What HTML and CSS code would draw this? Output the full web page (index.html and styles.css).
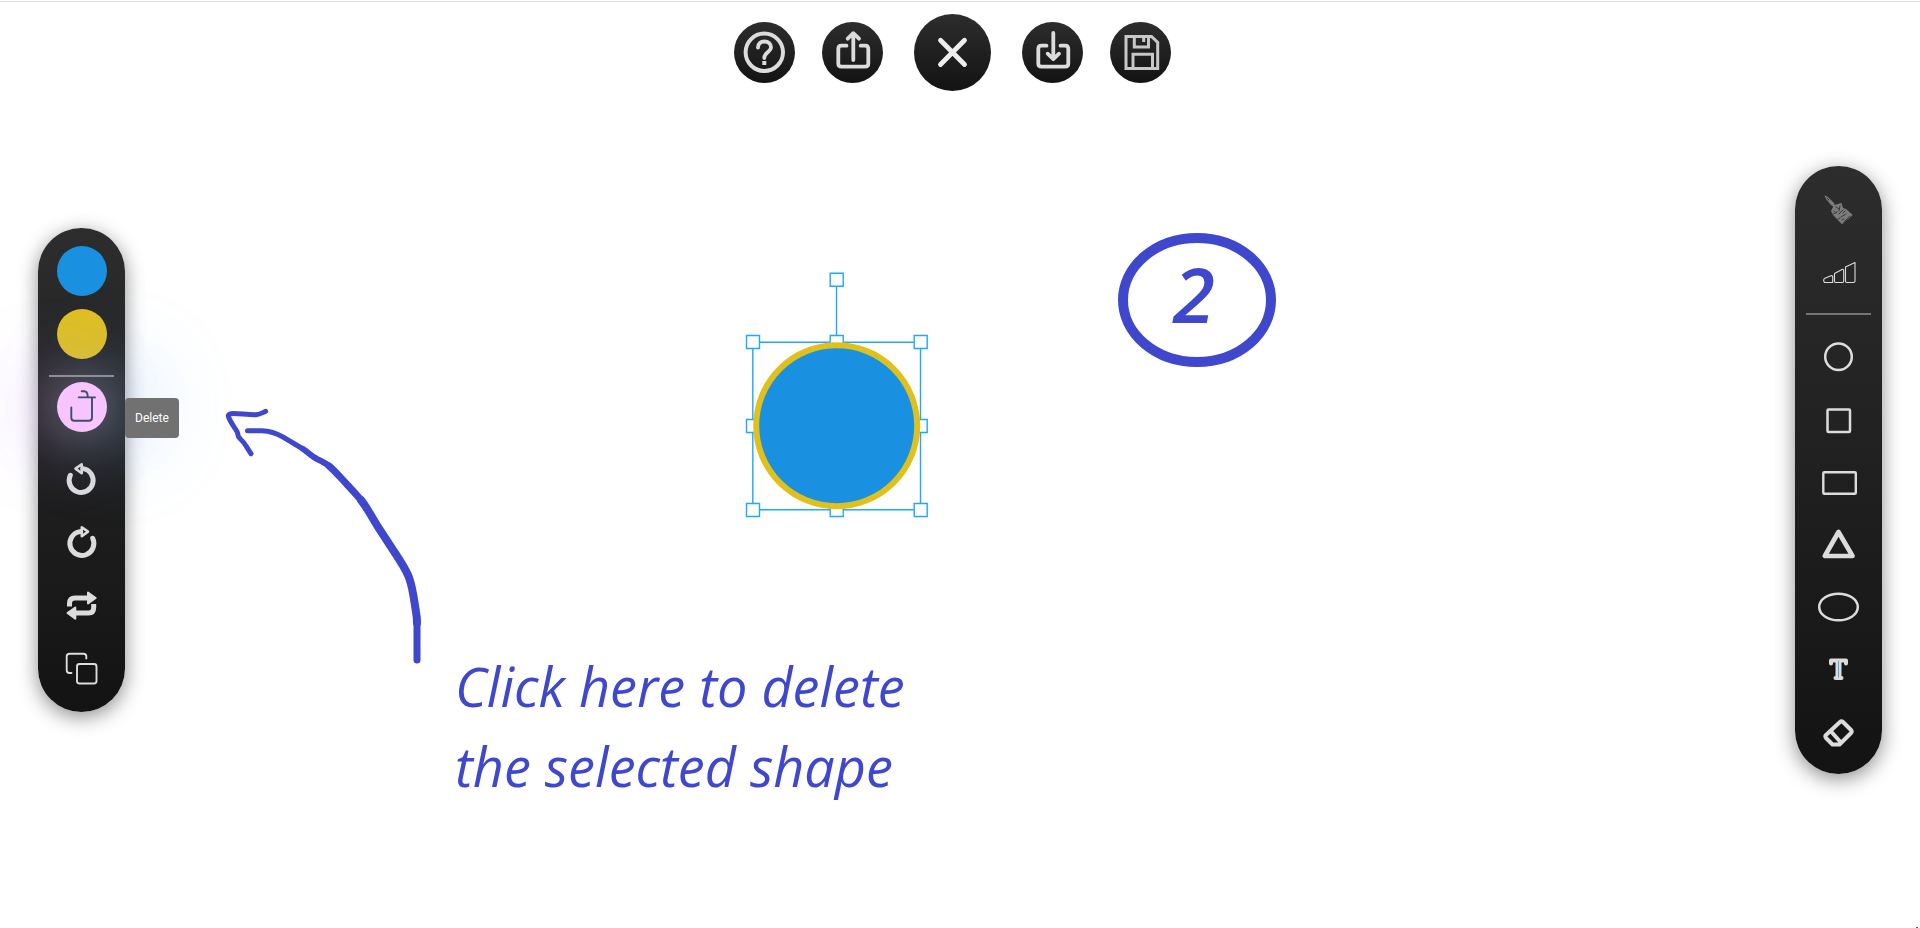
FILE: index.html
```html
<!DOCTYPE html>
<html lang="en">
<head>
<meta charset="utf-8">
<title>Whiteboard</title>
<link rel="stylesheet" href="styles.css">
</head>
<body>
<div class="app">
  <section class="canvas" aria-label="Drawing canvas">
    <svg class="drawing" aria-hidden="true">
      <g class="selection">
        <path d="M836.500 286V336M752.800 342.200H920.500V509.700H752.800Z"/>
        <path d="M830.200 273.200h13v13h-13zM746.500 335.500h13v13h-13zM830.200 335.500h13v13h-13zM914.200 335.500h13v13h-13zM746.500 419.500h13v13h-13zM914.200 419.500h13v13h-13zM746.500 503.500h13v13h-13zM830.200 503.500h13v13h-13zM914.200 503.500h13v13h-13z"/>
      </g>
      <circle class="shape" cx="836.7" cy="425.7" r="80.500"/>
      <g class="ink">
        <ellipse cx="1197" cy="300" rx="74" ry="62" stroke-width="10"/>
        <path stroke-width="5" d="M265.700 411.300C262 413 260 414.500 256 414.700C248 415 236 413 231 413.700Q227 414.500 229 418C231 423 235 428 237 431.500C238.500 434 237 436 240 438.500C245 443 247 448 251 453.700"/>
        <path stroke-width="5" d="M247.500 430.700H262C270 431 276 433 283 437L303 449C307 452 310 455 315 458"/>
        <path stroke-width="6" d="M303 449C308 452 311 456 317 459Q326 463 331 467.500"/>
        <path stroke-width="7" d="M329 466C335 471 340 477 347 484.500C353 491 359 497 364 504"/>
        <path stroke-width="8" d="M361 500C368 509 374 521 380 530L397 556C402 564 407 571 409.500 579C413 589 414 600 416 612Q417 617 417 623"/>
        <path stroke-width="7" d="M417 620V660"/>
      </g>
      <path class="speck" d="M1916 927h2v1h-2z"/>
    </svg>
    <p class="note">Click here to delete<br>the selected shape</p>
    <p class="step">2</p>
  </section>

  <header class="topbar">
    <button class="round" aria-label="Help"><svg viewBox="0 0 61 61"><circle cx="30.300" cy="30.300" r="18.700" stroke-width="4"/><path stroke-width="3.800" d="M24 25.500C24 21.500 26.800 19.500 30.500 19.500C34.500 19.500 37 22 37 25.300C37 30 30.300 30 30.300 36"/><path class="solid" d="M28.300 39h4v4h-4z"/></svg></button>
    <button class="round" aria-label="Share"><svg viewBox="0 0 61 61" stroke-width="3.800"><path d="M24.500 23.700H19.500Q16.300 23.700 16.300 27V41.500Q16.300 44.700 19.500 44.700H43Q46.300 44.700 46.300 41.500V27Q46.300 23.700 43 23.700H38.700M31.300 38V11.500M25.700 16.700L31.300 11.200L37 16.700"/></svg></button>
    <button class="round round-large" aria-label="Close"><svg viewBox="0 0 77 77"><path class="bright" stroke-width="4.800" d="M26.500 26.200L50.500 50.500M50.500 26.200L26.500 50.500"/></svg></button>
    <button class="round" aria-label="Download"><svg viewBox="0 0 61 61" stroke-width="3.800"><path d="M24.500 23.700H19.500Q16.300 23.700 16.300 27V41.500Q16.300 44.700 19.500 44.700H43Q46.300 44.700 46.300 41.500V27Q46.300 23.700 43 23.700H38.500M31.300 11V37M25.700 31.700L31.300 37.200L37 31.700"/></svg></button>
    <button class="round" aria-label="Save"><svg viewBox="0 0 61 61" class="sharp" stroke-width="3"><path d="M16 14.500H41.500L47.700 20.500V46.500H16ZM24.300 14.500V25H38.500V14.500M33.700 14.500V20M23 46.500V32.300H42.500V46.500"/></svg></button>
  </header>

  <main class="stage">
    <aside class="panel" aria-label="Edit">
      <button class="tool swatch fill" aria-label="Fill colour"></button>
      <button class="tool swatch outline" aria-label="Stroke colour"></button>
      <hr class="rule rule-tight">
      <div class="holder">
        <button class="tool swatch trash" aria-label="Delete" aria-describedby="tip"><svg viewBox="0 0 50 50" stroke-width="1.900"><path d="M14.300 25.500V35.700Q14.300 38.700 17.300 38.700H32Q35 38.700 35 35.700V15.400M21.700 15.400H38M24.700 9.300H27Q30.700 9.300 30.700 14.500"/></svg></button>
        <span class="tip" id="tip" role="tooltip">Delete</span>
      </div>
      <button class="tool" aria-label="Undo"><svg viewBox="0 0 50 50"><path stroke-width="5" d="M13.300 20.300A12 12 0 1 0 26 13.600"/><path stroke-width="2.600" d="M18.500 13.600L24.700 9.300V18.200Z"/></svg></button>
      <button class="tool" aria-label="Redo"><svg viewBox="0 0 50 50"><path stroke-width="5" d="M35.700 20.300A12 12 0 1 1 23 13.600"/><path stroke-width="2.600" d="M31 13.600L24.800 9.300V18.200Z"/></svg></button>
      <button class="tool" aria-label="Swap"><svg viewBox="0 0 50 50"><path class="sharp" stroke-width="5" d="M12.500 25.500V22.500Q12.500 17 18 17H30M36.700 23V26.500Q36.700 32 31.500 32H19"/><path class="solid" stroke-width="2" d="M31 11.500L38.700 17L31 22.500ZM18.300 26.500L10.500 32L18.300 37.700Z"/></svg></button>
      <button class="tool" aria-label="Duplicate"><svg viewBox="0 0 50 50" stroke-width="1.900"><path d="M14.500 29H12.500Q9.700 29 9.700 26V12.500Q9.700 9.800 12.500 9.800H26.500Q29.300 9.800 29.300 12.500V14.500"/><rect x="20" y="20" width="19.500" height="19.500" rx="2.500"/></svg></button>
    </aside>

    <aside class="panel panel-shapes" aria-label="Shapes">
      <button class="tool" aria-label="Brush"><svg viewBox="0 0 50 50"><path class="grey" d="M10.300 11.300L14 13L20 19L21.500 24L17 21L12 15Z"/><path class="grey" d="M17 27L20 21L27.500 19L29 24L32 25L38.700 31L28 40.300L19 31Z"/><path class="grain" stroke-width="1" d="M20 27l2 2M22 23l3 2M26 22l-1 5M19 30l4-2M25 30l4-4M31 27l-2 2M27 33l5-3M24 35l2-1M30 38l6-6M28 36l2-1M13 14l2 2"/></svg></button>
      <button class="tool" aria-label="Thickness"><svg viewBox="0 0 50 50" stroke-width="1.100"><path d="M9.700 34V33Q9.700 32 11 31.300L17.500 28.500Q18.700 28.500 18.700 29.500V35.500H10.500ZM20.500 26.500L28.500 22.300Q29.700 22.300 29.700 23.500V34Q29.700 35.500 28.500 35.500H21.500Q20.500 35.500 20.500 34ZM31.500 20L41 15.500V34Q41 35.500 39.500 35.500H32.500Q31.500 35.500 31.500 34Z"/></svg></button>
      <hr class="rule">
      <button class="tool" aria-label="Circle"><svg viewBox="0 0 50 50"><circle cx="24.500" cy="24.700" r="13.300" stroke-width="2.500"/></svg></button>
      <button class="tool" aria-label="Square"><svg viewBox="0 0 50 50"><rect x="13.500" y="14.500" width="22.500" height="22.500" rx="1" stroke-width="2.500"/></svg></button>
      <button class="tool" aria-label="Rectangle"><svg viewBox="0 0 50 50"><rect x="9.300" y="14.300" width="32.500" height="21.500" rx="1" stroke-width="2.400"/></svg></button>
      <button class="tool" aria-label="Triangle"><svg viewBox="0 0 50 50"><path stroke-width="4.700" d="M24.500 11L10.800 35H38.500Z"/></svg></button>
      <button class="tool" aria-label="Ellipse"><svg viewBox="0 0 50 50"><ellipse cx="24.500" cy="23" rx="19.300" ry="13.300" stroke-width="2.500"/></svg></button>
      <button class="tool" aria-label="Text"><svg viewBox="0 0 50 50"><path stroke-width="4" d="M17 16.500V13.500H32V16.500M21.500 31H27.500"/><path class="sharp" stroke-width="6" d="M24.500 12V32"/><path class="caret" stroke-width="1" d="M24.500 14V30"/></svg></button>
      <button class="tool" aria-label="Eraser"><svg viewBox="0 0 50 50" stroke-width="4"><path d="M26 12Q27.500 10.500 29 12L37 20Q38.500 21.500 37 23L25.500 34.500H18.500L12 28Q10.700 26.300 12 25ZM17.500 22L26 31.500"/></svg></button>
    </aside>
  </main>
</div>
</body>
</html>
```

FILE: styles.css
```css
* { box-sizing: border-box; }

body {
  margin: 0;
  background: #fff;
  font-family: Roboto, "Liberation Sans", sans-serif;
}

.app {
  position: relative;
  display: flex;
  flex-direction: column;
  min-height: 100vh;
  overflow: hidden;
}

.canvas {
  position: absolute;
  inset: 1px 0 0;
  border-top: 1px solid #dcdcdc;
  color: #3f48cc;
  font-family: "Segoe Print", "Open Sans", sans-serif;
  font-style: italic;
}

.drawing {
  position: absolute;
  top: -2px;
  left: 0;
  width: 100%;
  height: calc(100% + 2px);
  overflow: visible;
}

.selection { fill: #fff; stroke: #1fa9fb; stroke-width: 1.4; }
.shape { fill: #1a91e0; stroke: #e0c01c; stroke-width: 6; }
.ink { fill: none; stroke: #3f48cc; stroke-linecap: round; stroke-linejoin: round; }
.speck { fill: #555; }

.note, .step {
  position: absolute;
  margin: 0;
  white-space: nowrap;
}

.note { left: 455px; top: 644px; font-size: 54px; line-height: 80px; }
.step { left: 1173px; top: 242px; font-size: 76px; font-weight: 600; line-height: 100px; }

.topbar {
  position: relative;
  display: flex;
  justify-content: center;
  align-items: center;
  gap: 27px;
  padding: 14px 16px 1px 0;
}

button {
  padding: 0;
  border: 0;
  background: none;
  cursor: pointer;
}

svg { display: block; }

button svg {
  width: 100%;
  height: 100%;
  fill: none;
  stroke: #dcdcdc;
  stroke-linecap: round;
  stroke-linejoin: round;
}

.round {
  width: 61px;
  height: 61px;
  border-radius: 50%;
  background: linear-gradient(#2d2d2d, #131313);
}

.round-large { width: 77px; height: 77px; margin: 0 4px; }

button .solid { fill: #dcdcdc; }
.round .solid { stroke: none; }
button .bright { stroke: #eee; }
button .sharp { stroke-linecap: butt; stroke-linejoin: miter; }
button svg.sharp { stroke: #c8c8c8; }
button .grey { fill: #7c7c7c; stroke: none; }
button .grain { stroke: #383838; }
button .caret { stroke: #5aa7e0; }

.stage {
  flex: 1;
  display: flex;
  justify-content: space-between;
  align-items: center;
  padding: 0 38px 80px;
  pointer-events: none;
}

.panel {
  position: relative;
  display: flex;
  flex-direction: column;
  gap: 13px;
  width: 87px;
  padding: 18px 18px 18px 19px;
  border-radius: 44px;
  background: linear-gradient(#2d2d2d, #131313);
  box-shadow: 0 5px 20px rgba(0, 0, 0, .45);
  pointer-events: auto;
}

.panel-shapes { padding-bottom: 14px; }

.tool { width: 50px; height: 50px; }

.rule {
  width: 65px;
  height: 2px;
  margin: 3px -7px 4px -8px;
  border: 0;
  background: #757575;
}

.rule-tight { margin-bottom: -8px; background: #8f8c9e; z-index: 1; }

.swatch { border-radius: 50%; }
.fill { background: #1a91e0; position: relative; z-index: 1; }
.outline { background: #dfc022; }

.holder {
  position: relative;
  height: 50px;
  margin-bottom: 10px;
}

.trash {
  background: #f8c4ff;
  box-shadow:
    0 0 50px rgba(255, 255, 255, .32),
    -30px 0 80px 10px rgba(225, 130, 255, .26),
    30px 0 80px 20px rgba(110, 180, 255, .26);
}

.trash svg { stroke: #3b4f68; }

.tip {
  position: absolute;
  left: 68px;
  top: 16px;
  padding: 0 10px;
  border-radius: 4px;
  background: #707170;
  color: #fff;
  font-size: 12px;
  line-height: 40px;
}
```
